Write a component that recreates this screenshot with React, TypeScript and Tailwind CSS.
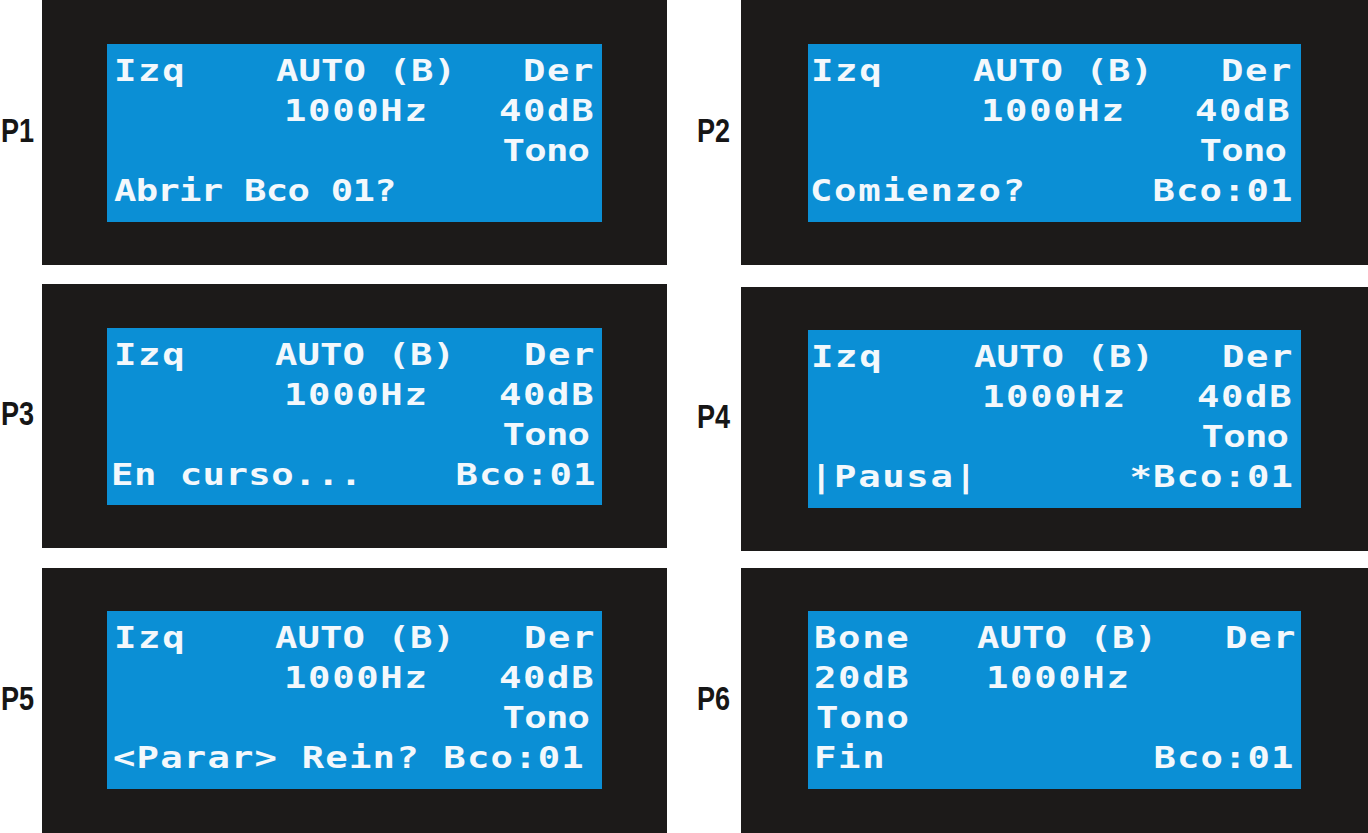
import React from 'react'

type Seg = { t: string; box?: string; ls?: string; right?: boolean }

// four LCD lines, 40px apart
const rowH = ['h-[40px]', 'h-[40px]', 'h-[40px]', 'h-[40px]']

const P1: Seg[][] = [
  [
    { t: 'Izq', box: 'w-[169px] pl-[7px]' },
    { t: 'AUTO (B)', ls: 'tracking-[0.1px]' },
    { t: 'Der', box: 'ml-auto pr-[7px]', right: true },
  ],
  [
    { t: '1000Hz', box: 'pl-[177px]' },
    { t: '40dB', box: 'ml-auto pr-[7px]', right: true },
  ],
  [{ t: 'Tono', box: 'ml-auto pr-[13px]', ls: 'tracking-[-0.6px]', right: true }],
  [{ t: 'Abrir Bco 01?', box: 'pl-[7px]', ls: 'tracking-[-0.6px]' }],
]

const P2: Seg[][] = [
  [
    { t: 'Izq', box: 'w-[165px] pl-[3px]' },
    { t: 'AUTO (B)', ls: 'tracking-[0.1px]' },
    { t: 'Der', box: 'ml-auto pr-[8px]', right: true },
  ],
  [
    { t: '1000Hz', box: 'pl-[173px]' },
    { t: '40dB', box: 'ml-auto pr-[10px]', right: true },
  ],
  [{ t: 'Tono', box: 'ml-auto pr-[15px]', ls: 'tracking-[-0.6px]', right: true }],
  [
    { t: 'Comienzo?', box: 'pl-[2px]' },
    { t: 'Bco:01', box: 'ml-auto pr-[8px]', ls: 'tracking-[0.9px]', right: true },
  ],
]

const P3: Seg[][] = [
  [
    { t: 'Izq', box: 'w-[168px] pl-[7px]' },
    { t: 'AUTO (B)', ls: 'tracking-[0.1px]' },
    { t: 'Der', box: 'ml-auto pr-[6px]', right: true },
  ],
  [
    { t: '1000Hz', box: 'pl-[177px]' },
    { t: '40dB', box: 'ml-auto pr-[7px]', right: true },
  ],
  [{ t: 'Tono', box: 'ml-auto pr-[13px]', ls: 'tracking-[-0.6px]', right: true }],
  [
    { t: 'En curso...', box: 'pl-[4px]', ls: 'tracking-[0.4px]' },
    { t: 'Bco:01', box: 'ml-auto pr-[6px]', ls: 'tracking-[0.9px]', right: true },
  ],
]

const P4: Seg[][] = [
  [
    { t: 'Izq', box: 'w-[166px] pl-[3px]' },
    { t: 'AUTO (B)', ls: 'tracking-[0.1px]' },
    { t: 'Der', box: 'ml-auto pr-[7px]', right: true },
  ],
  [
    { t: '1000Hz', box: 'pl-[174px]' },
    { t: '40dB', box: 'ml-auto pr-[8px]', right: true },
  ],
  [{ t: 'Tono', box: 'ml-auto pr-[13px]', ls: 'tracking-[-0.6px]', right: true }],
  [
    { t: '|Pausa|', box: 'pl-[2px]' },
    { t: '*Bco:01', box: 'ml-auto pr-[7px]', ls: 'tracking-[0.9px]', right: true },
  ],
]

const P5: Seg[][] = [
  P3[0],
  P3[1],
  P3[2],
  [{ t: '<Parar> Rein? Bco:01', box: 'pl-[6px]', ls: 'tracking-[1px]' }],
]

const P6: Seg[][] = [
  [
    { t: 'Bone', box: 'w-[169px] pl-[6px]' },
    { t: 'AUTO (B)', ls: 'tracking-[0.1px]' },
    { t: 'Der', box: 'ml-auto pr-[4px]', right: true },
  ],
  [
    { t: '20dB', box: 'w-[178px] pl-[6px]' },
    { t: '1000Hz' },
  ],
  [{ t: 'Tono', box: 'pl-[8px]', ls: 'tracking-[0.9px]' }],
  [
    { t: 'Fin', box: 'pl-[6px]' },
    { t: 'Bco:01', box: 'ml-auto pr-[7px]', ls: 'tracking-[0.9px]', right: true },
  ],
]

function Chars({ s }: { s: Seg }) {
  return (
    <span
      className={`inline-block whitespace-pre scale-x-[1.2] ${s.right ? 'origin-right' : 'origin-left'} ${s.ls ?? 'tracking-[1.4px]'}`}
    >
      {s.t}
    </span>
  )
}

function Lcd({ rows, size }: { rows: Seg[][]; size: string }) {
  return (
    <div
      className={`${size} bg-[#0b8fd5] pt-[6px] flex flex-col text-[31px] leading-[40px] font-bold text-[#f3f8fc] [font-family:'DejaVu_Sans_Mono','Liberation_Mono',monospace]`}
    >
      {rows.map((r, i) => (
        <div key={i} className={`flex ${rowH[i]}`}>
          {r.map((s, j) => (
            <div key={j} className={s.box}>
              <Chars s={s} />
            </div>
          ))}
        </div>
      ))}
    </div>
  )
}

function Label({ text }: { text: string }) {
  return (
    <span className="inline-block -mt-[4px] origin-left scale-x-[0.82] text-[33px] leading-none font-bold text-[#161616] [font-family:'Liberation_Sans',Arial,sans-serif]">
      {text}
    </span>
  )
}

export default function App() {
  return (
    <div className="w-[1368px] h-[833px] bg-white flex overflow-hidden">
      {/* left column */}
      <div className="flex flex-col w-[667px]">
        <div className="flex items-center h-[265px]">
          <div className="w-[42px] pl-[1px]"><Label text="P1" /></div>
          <div className="w-[625px] h-full bg-[#1c1a19] pl-[65px] pt-[44px]">
            <Lcd rows={P1} size="w-[495px] h-[178px]" />
          </div>
        </div>
        <div className="flex items-center h-[264px] mt-[19px]">
          <div className="w-[42px] pl-[1px]"><Label text="P3" /></div>
          <div className="w-[625px] h-full bg-[#1c1a19] pl-[65px] pt-[44px]">
            <Lcd rows={P3} size="w-[495px] h-[177px]" />
          </div>
        </div>
        <div className="flex items-center h-[265px] mt-[20px]">
          <div className="w-[42px] pl-[1px]"><Label text="P5" /></div>
          <div className="w-[625px] h-full bg-[#1c1a19] pl-[65px] pt-[43px]">
            <Lcd rows={P5} size="w-[495px] h-[178px]" />
          </div>
        </div>
      </div>

      {/* right column */}
      <div className="flex flex-col ml-[30px] w-[671px]">
        <div className="flex items-center h-[265px]">
          <div className="w-[44px]"><Label text="P2" /></div>
          <div className="w-[627px] h-full bg-[#1c1a19] pl-[67px] pt-[44px]">
            <Lcd rows={P2} size="w-[493px] h-[178px]" />
          </div>
        </div>
        <div className="flex items-center h-[264px] mt-[22px]">
          <div className="w-[44px]"><Label text="P4" /></div>
          <div className="w-[627px] h-full bg-[#1c1a19] pl-[67px] pt-[43px]">
            <Lcd rows={P4} size="w-[493px] h-[178px]" />
          </div>
        </div>
        <div className="flex items-center h-[265px] mt-[17px]">
          <div className="w-[44px]"><Label text="P6" /></div>
          <div className="w-[627px] h-full bg-[#1c1a19] pl-[67px] pt-[43px]">
            <Lcd rows={P6} size="w-[493px] h-[178px]" />
          </div>
        </div>
      </div>
    </div>
  )
}
